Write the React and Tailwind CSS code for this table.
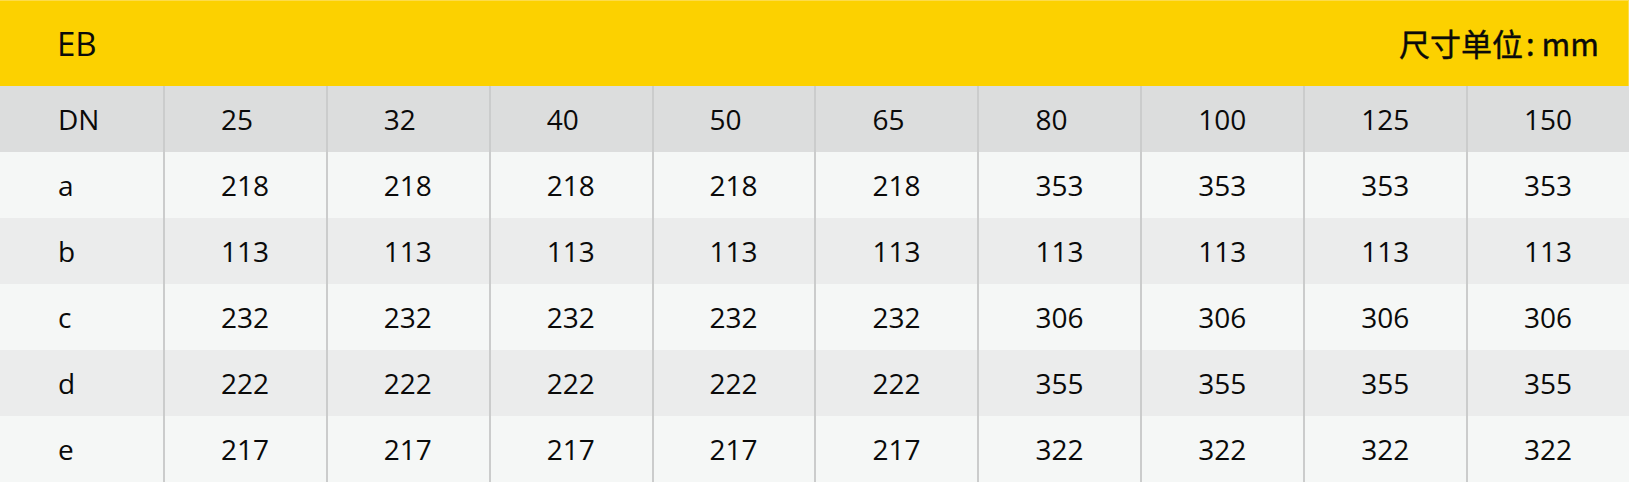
import React from 'react';

const cols = ['25','32','40','50','65','80','100','125','150'];

const rows = [
  { k:'a', v:['218','218','218','218','218','353','353','353','353'] },
  { k:'b', v:['113','113','113','113','113','113','113','113','113'] },
  { k:'c', v:['232','232','232','232','232','306','306','306','306'] },
  { k:'d', v:['222','222','222','222','222','355','355','355','355'] },
  { k:'e', v:['217','217','217','217','217','322','322','322','322'] },
];

// una fila de la tabla: etiqueta + 9 valores
function Fila({ label, values, bg }){
  return (
    <div className={`grid grid-cols-10 h-[66px] ${bg}`}>
      <div className="flex items-center pl-[58px]">{label}</div>
      {values.map((v,i)=>(
        <div key={i} className="flex items-center pl-[56px] border-l-2 border-[#cbcccc]">{v}</div>
      ))}
    </div>
  );
}

export default function App(){
  return (
    <div className="w-[1629px] h-[482px] text-[28px] text-[#0a0a0a] overflow-hidden font-['Open_Sans','Noto_Sans_CJK_SC',sans-serif]">
      <div className="h-[86px] bg-[#fcd100] border-t border-r border-[#fddc4a] flex items-center justify-between pl-[57px] pr-[29px]">
        <span className="text-[33px]">EB</span>
        <span className="text-[31px] flex items-center font-['Noto_Sans_CJK_SC',sans-serif] [-webkit-text-stroke:0.4px_#0a0a0a]">
          <span>尺寸单位</span><span className="ml-[3px] mr-[7px]">:</span><span>mm</span>
        </span>
      </div>
      <Fila label="DN" values={cols} bg="bg-[#dcdddd]" />
      {rows.map((r,i)=>(
        <Fila key={r.k} label={r.k} values={r.v} bg={i%2===0 ? 'bg-[#f5f7f6]' : 'bg-[#ebecec]'} />
      ))}
    </div>
  );
}
